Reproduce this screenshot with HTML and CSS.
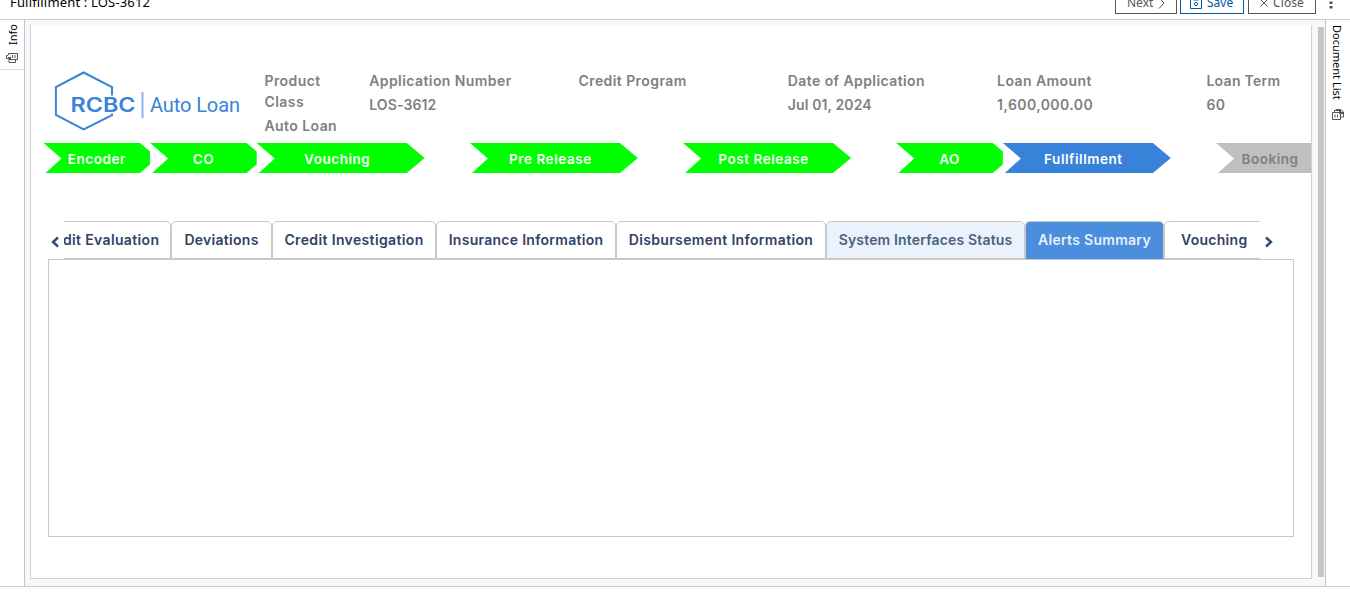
FILE: index.html
```html
<!DOCTYPE html>
<html lang="en">
<head>
<meta charset="utf-8">
<title>Fullfillment : LOS-3612</title>
<link rel="stylesheet" href="styles.css">
</head>
<body>
<header class="topbar">
  <h1 class="title">Fullfillment : LOS-3612</h1>
  <div class="actions">
    <button class="btn next">Next
      <svg width="7" height="12" viewBox="0 0 7 12"><path d="M1 .5L6 6l-5 5.500" fill="none" stroke="currentColor"/></svg>
    </button>
    <button class="btn save">
      <svg width="12" height="12" viewBox="0 0 12 12"><path d="M.5 .5h9l2 2v9H.5zM3.500.5v2.500h5V.5" fill="none" stroke="currentColor"/><circle cx="6" cy="7" r="1.600" fill="none" stroke="currentColor"/></svg>
      Save</button>
    <button class="btn close">
      <svg width="8" height="8" viewBox="0 0 8 8"><path d="M.5 .5l7 7M7.500.5l-7 7" fill="none" stroke="currentColor"/></svg>
      Close</button>
    <svg class="more" width="4" height="12" viewBox="0 0 4 12"><g fill="#555"><rect x=".5" y="0" width="3" height="2.500"/><rect x=".5" y="4.500" width="3" height="2.500"/><rect x=".5" y="9" width="3" height="2.500"/></g></svg>
  </div>
</header>
<div class="body">
  <aside class="rail left">
    <div class="rail-item">
      <span class="info">Info</span>
      <svg width="12" height="11" viewBox="0 0 12 11"><path d="M2.500 1V.5h9v6H11M2.500 1v1M2 2.500H.5v3H2M3 4v5.500h6.500V7M3 6.500h8.500" fill="none" stroke="#555"/><path d="M6 2h1v3H6zM8.500 2h1v3h-1zM2 4h3v3H3z" fill="#555"/></svg>
    </div>
  </aside>
  <main class="work">
    <section class="panel">
      <div class="summary">
        <svg class="logo" width="190" height="62" viewBox="-1 -.5 190 62">
          <path d="M58 25V16.500L29.600 2 1.900 16.500v28L29.600 59 58 44.700V43" fill="none" stroke="#3a82da" stroke-width="2"/>
          <text x="16.500" y="41" class="logo-a" textLength="65" lengthAdjust="spacingAndGlyphs">RCBC</text>
          <path d="M88.500 21.500v26" stroke="#8bb5ea" stroke-width="2"/>
          <text x="96" y="41" class="logo-b" textLength="90">Auto Loan</text>
        </svg>
        <dl class="facts">
          <div class="fact narrow"><dt>Product Class</dt><dd>Auto Loan</dd></div>
          <div class="fact"><dt>Application Number</dt><dd class="tight">LOS-3612</dd></div>
          <div class="fact"><dt>Credit Program</dt><dd></dd></div>
          <div class="fact"><dt>Date of Application</dt><dd class="tight">Jul 01, 2024</dd></div>
          <div class="fact"><dt>Loan Amount</dt><dd>1,600,000.00</dd></div>
          <div class="fact"><dt class="term">Loan Term</dt><dd>60</dd></div>
        </dl>
      </div>
      <div class="steps">
        <div class="cell"><div class="step short">Encoder</div></div>
        <div class="cell"><div class="step short">CO</div></div>
        <div class="cell wide"><div class="step">Vouching</div></div>
        <div class="cell wide"><div class="step">Pre Release</div></div>
        <div class="cell wide"><div class="step">Post Release</div></div>
        <div class="cell"><div class="step short">AO</div></div>
        <div class="cell wide"><div class="step current">Fullfillment</div></div>
        <div class="cell"><div class="step pending">Booking</div></div>
      </div>
      <div class="tabbar">
        <svg class="arrow" width="8" height="12" viewBox="0 0 8 12"><path d="M7 1.500L2 6l5 4.500" fill="none" stroke="#2f4a73" stroke-width="2.400"/></svg>
        <div class="tabs">
          <div class="tab t1">dit Evaluation</div>
          <div class="tab t2">Deviations</div>
          <div class="tab t3">Credit Investigation</div>
          <div class="tab t4">Insurance Information</div>
          <div class="tab t5">Disbursement Information</div>
          <div class="tab t6 hover">System Interfaces Status</div>
          <div class="tab t7 active">Alerts Summary</div>
          <div class="tab t8">Vouching</div>
        </div>
        <svg class="arrow" width="8" height="12" viewBox="0 0 8 12"><path d="M1 1.500L6 6l-5 4.500" fill="none" stroke="#2f4a73" stroke-width="2.400"/></svg>
      </div>
      <div class="content"></div>
    </section>
    <div class="scrollbar"></div>
  </main>
  <aside class="rail right">
    <span class="doclist">Document List</span>
    <svg width="12" height="11" viewBox="0 0 12 11"><path d="M.5 3.500h8v7h-8zM2.500 3V1.500h6M4 1V.5h4.500L11.500 3v5H9" fill="none" stroke="#555"/><path d="M2.500 5.500h1v3h-1zM5 5.500h1v3H5zM7 1h2v2h2v2H7z" fill="#555"/></svg>
  </aside>
</div>
</body>
</html>
```

FILE: styles.css
```css
* { box-sizing: border-box; }
body { margin: 0; width: 1350px; height: 602px; overflow: hidden; background: #fff; font-family: "Noto Sans", sans-serif; }
svg { display: block; flex: none; }

.topbar { height: 20px; border-bottom: 1px solid #ccc; display: flex; justify-content: space-between; align-items: flex-end; overflow: hidden; padding: 0 17px 5px 10px; }
.title { margin: 0 0 3px; font-size: 13px; font-weight: 400; line-height: 18px; letter-spacing: .17px; color: #000; }
.actions { display: flex; align-items: flex-end; }
.btn { height: 28px; display: flex; align-items: center; border: 1px solid #555; background: #fff; color: #555; padding: 5px 11px 0; font: 12px/18px "Noto Sans", sans-serif; border-radius: 0; gap: 5px; }
.next { width: 62px; margin-right: 3px; }
.save { width: 64px; margin-right: 4px; color: #0059a3; border-color: #0059a3; padding-left: 9px; }
.close { width: 68px; letter-spacing: .1px; }
.more { margin: 0 0 5px 13px; }

.body { height: 567px; display: flex; border-bottom: 1px solid #ccc; }
.rail { width: 25px; background: #fff; font-size: 11px; color: #000; }
.left { border-right: 1px solid #c4c4c4; }
.rail-item { height: 50px; border-bottom: 1px solid #ddd; display: flex; flex-direction: column; align-items: center; padding-top: 5px; gap: 8px; }
.info { writing-mode: vertical-rl; transform: rotate(180deg); line-height: 16px; height: 20px; margin-left: 2px; }
.right { border-left: 1px solid #c4c4c4; display: flex; flex-direction: column; align-items: center; padding-top: 5px; gap: 10px; }
.doclist { writing-mode: vertical-rl; line-height: 16px; height: 74px; white-space: nowrap; margin-right: 3px; }

.work { flex: 1; background: #f7f8fb; display: flex; padding: 5px 1px 0 5px; }
.panel { width: 1282px; height: 554px; background: #fff; border: 1px solid #d2d2d2; border-top: 0; overflow: hidden; font-family: Inter, sans-serif; font-weight: 600; }
.scrollbar { width: 6px; height: 550px; margin: 2px 0 0 6px; background: #c6c6c6; }

.summary { display: flex; height: 118px; padding: 45px 0 0 22px; }
.logo { width: 190px; }
.logo-a { font: 600 20px Inter, sans-serif; fill: #3a82da; }
.logo-b { font: 400 20px Roboto, sans-serif; fill: #3a82da; }
.facts { display: flex; margin: 0 0 0 21.500px; font-size: 14px; line-height: 21px; letter-spacing: .42px; color: #808080; flex: none; }
.fact { width: 209.300px; flex: none; }
.fact.narrow { width: 104.700px; }
.narrow dt { width: 70px; }
.term { letter-spacing: .3px; }
dd { margin: 3px 0 0; }
dd.tight { letter-spacing: .12px; }

.steps { display: flex; height: 30px; margin-left: 12.500px; font-size: 13.500px; line-height: 32px; letter-spacing: .55px; text-align: center; color: #fff; }
.cell { width: 106.600px; flex: none; }
.wide { width: 213.200px; }
.step { width: 168px; height: 30px; padding-right: 7px; background: #0f0; clip-path: polygon(0 0, 150px 0, 168px 15px, 150px 30px, 2px 30px, 18px 15.500px); }
.short { width: 106.600px; padding-right: 0; clip-path: polygon(0 0, 96.500px 0, 106.600px 8.500px, 106.600px 21.500px, 96.500px 30px, 2px 30px, 18px 15.500px); }
.current { background: #3882da; }
.pending { background: #bfbfbf; color: #808080; padding-right: 60px; }

.tabbar { display: flex; align-items: center; height: 38px; margin: 48px 0 0 20px; }
.arrow { margin-top: 3px; }
.tabs { display: flex; width: 1196px; height: 38px; margin: 0 5px; overflow: hidden; font-size: 14px; line-height: 36px; letter-spacing: .28px; text-align: center; color: #2f4267; white-space: nowrap; }
.tab { flex: none; border: 1px solid #c8c8c8; border-radius: 5px 5px 0 0; }
.t1 { width: 107px; border-left: 0; border-radius: 0 5px 0 0; text-align: left; text-indent: -1px; letter-spacing: .35px; }
.t2 { width: 101px; }
.t3 { width: 164px; letter-spacing: .36px; }
.t4 { width: 180px; }
.t5 { width: 210px; letter-spacing: .34px; }
.t6 { width: 199px; letter-spacing: .16px; }
.t7 { width: 139px; }
.t8 { width: 110px; text-align: left; padding-left: 16px; }
.hover { background: #eaf3fb; color: #4b6180; }
.active { background: #4b8edd; border-bottom-color: #4b8edd; color: #e9f1fb; }
.content { width: 1246px; height: 278px; margin-left: 17px; border: 1px solid #c8c8c8; }
```
